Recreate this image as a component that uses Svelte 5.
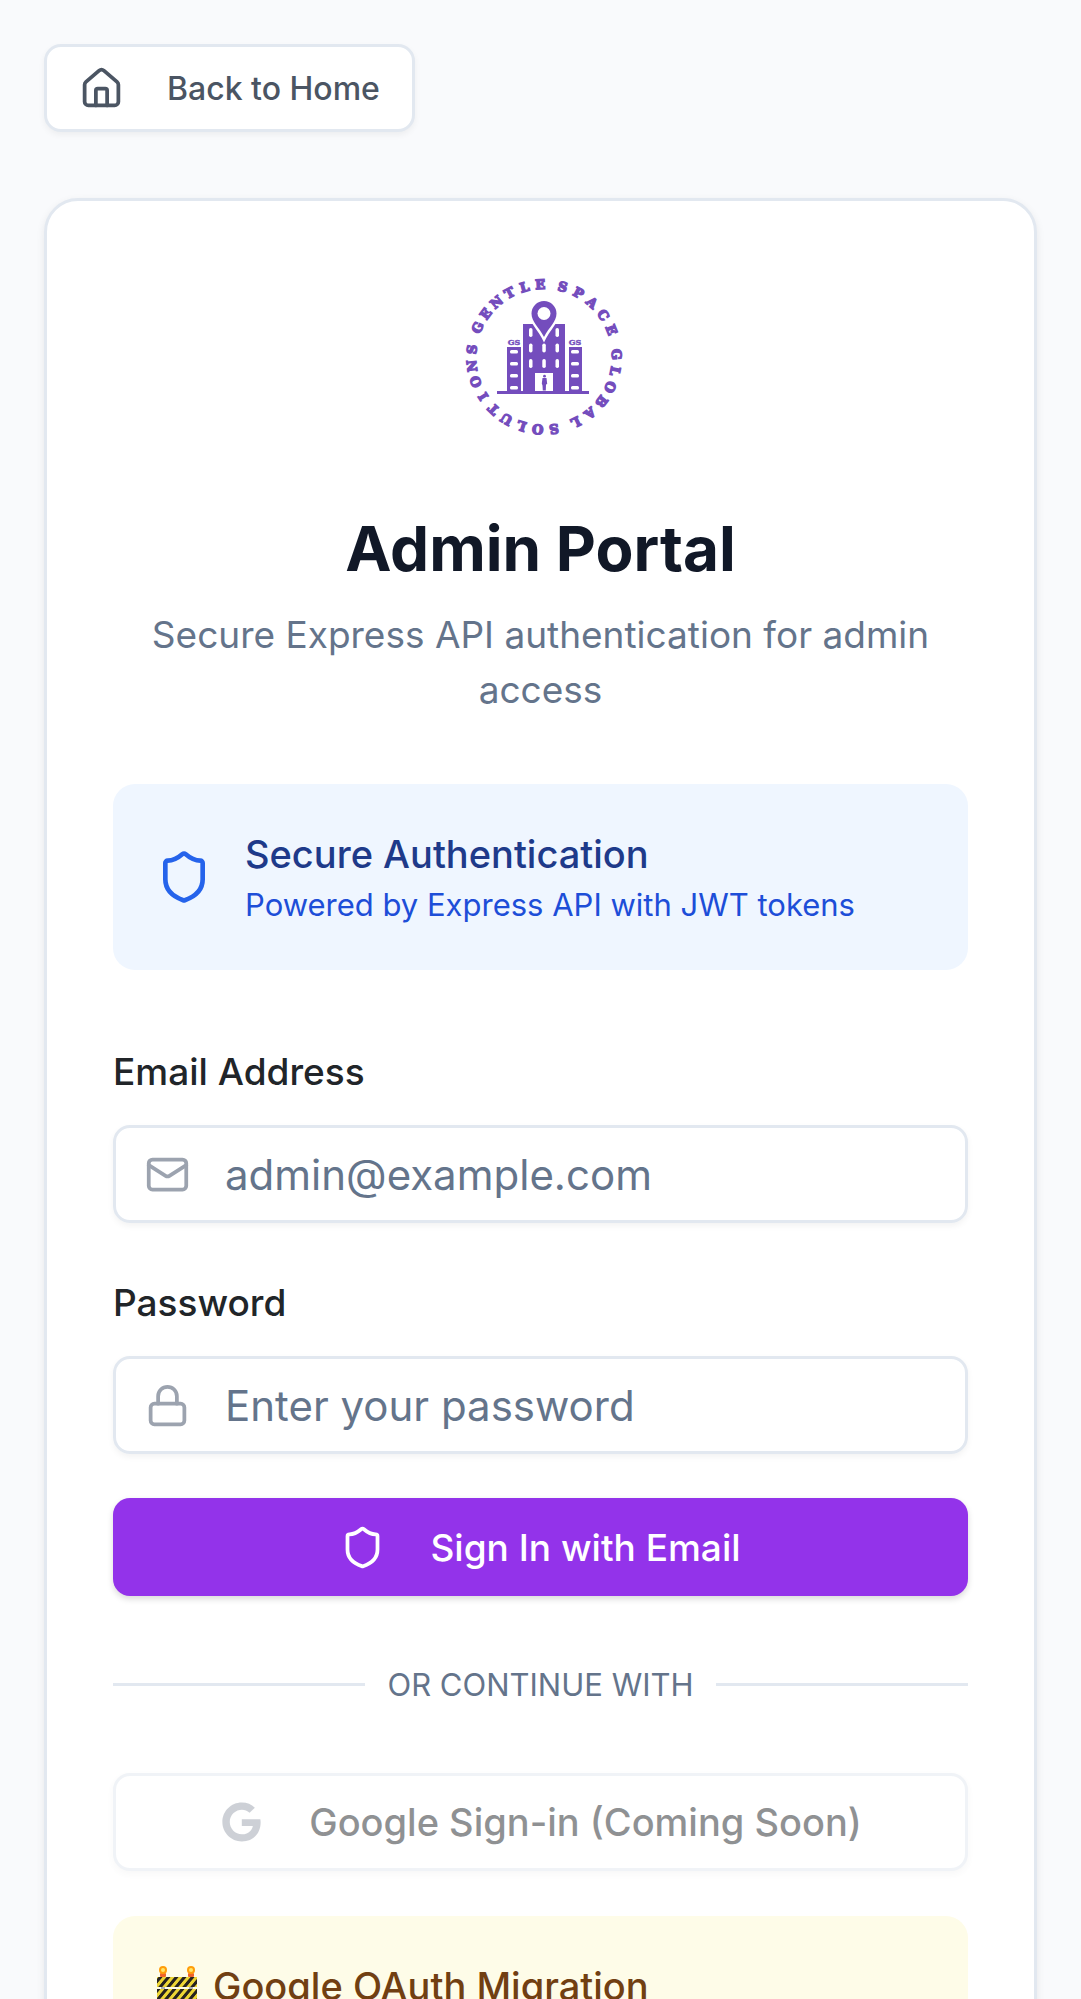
<script>
  const shield =
    'M20 13c0 5-3.5 7.5-7.66 8.95a1 1 0 0 1-.67-.01C7.5 20.5 4 18 4 13V6a1 1 0 0 1 1-1c2 0 4.5-1.2 6.24-2.72a1.17 1.17 0 0 1 1.52 0C14.51 3.81 17 5 19 5a1 1 0 0 1 1 1z';

  // Words of the round emblem, each with the angles of its first and last letter.
  const words = [
    { text: 'GENTLE', from: -66, to: -3 },
    { text: 'SPACE', from: 15, to: 68 },
    { text: 'GLOBAL', from: 88, to: 154 },
    { text: 'SOLUTIONS', from: 172, to: 276 },
  ];
  const letters = words.flatMap(({ text, from, to }) =>
    [...text].map((char, i) => ({
      char,
      angle: from + ((to - from) * i) / (text.length - 1),
    }))
  );

  let email = $state('');
  let password = $state('');
</script>

<main>
  <a class="back" href="/">
    <svg class="icon" viewBox="0 0 24 24" aria-hidden="true">
      <path d="M15 21v-8a1 1 0 0 0-1-1h-4a1 1 0 0 0-1 1v8" />
      <path d="M3 10a2 2 0 0 1 .709-1.528l7-5.999a2 2 0 0 1 2.582 0l7 5.999A2 2 0 0 1 21 10v9a2 2 0 0 1-2 2H5a2 2 0 0 1-2-2z" />
    </svg>
    Back to Home
  </a>

  <section class="card">
    <header>
      <svg class="logo" viewBox="0 0 160 160" role="img" aria-label="Gentle Space Global Solutions">
        {#each letters as { char, angle }}
          <text class="ring" x="80" y="12" transform="rotate({angle} 80 80)">{char}</text>
        {/each}
        <path d="M33 114h92v3H33z" />
        <path d="M43 70h14v45H43zM105 70h13v45h-13z" />
        <path d="M59 47h42v68H59z" />
        <text class="tag" x="50" y="68">GS</text>
        <text class="tag" x="111" y="68">GS</text>
        <g class="gap">
          <rect x="46" y="73" width="8" height="3.5" rx="1.5" />
          <rect x="46" y="85" width="8" height="3.5" rx="1.5" />
          <rect x="46" y="97" width="8" height="3.5" rx="1.5" />
          <rect x="46" y="109" width="8" height="3.5" rx="1.5" />
          <rect x="107" y="73" width="8" height="3.5" rx="1.5" />
          <rect x="107" y="85" width="8" height="3.5" rx="1.5" />
          <rect x="107" y="97" width="8" height="3.5" rx="1.5" />
          <rect x="107" y="109" width="8" height="3.5" rx="1.5" />
          <rect x="65" y="51" width="3.5" height="9" rx="1.7" />
          <rect x="91.5" y="51" width="3.5" height="9" rx="1.7" />
          <rect x="65" y="66.5" width="3.5" height="9" rx="1.7" />
          <rect x="78.3" y="66.5" width="3.5" height="9" rx="1.7" />
          <rect x="91.5" y="66.5" width="3.5" height="9" rx="1.7" />
          <rect x="65" y="82" width="3.5" height="9" rx="1.7" />
          <rect x="78.3" y="82" width="3.5" height="9" rx="1.7" />
          <rect x="91.5" y="82" width="3.5" height="9" rx="1.7" />
          <rect x="71" y="96" width="18" height="18" />
        </g>
        <path class="pin" d="M80 24a12.5 12.5 0 0 0-12.5 12.5C67.5 45 75 50 80 60c5-10 12.5-15 12.5-23.5A12.5 12.5 0 0 0 80 24z" />
        <circle class="gap" cx="80" cy="36.5" r="6.5" />
        <circle cx="80.5" cy="99.2" r="1.4" />
        <path d="M78.5 101h4l.7 6-1.2.5-.2 6h-3l-.3-5-.7-2z" />
      </svg>
      <h1>Admin Portal</h1>
      <p>Secure Express API authentication for admin access</p>
    </header>

    <div class="info">
      <svg class="icon large" viewBox="0 0 24 24" aria-hidden="true"><path d={shield} /></svg>
      <div>
        <strong>Secure Authentication</strong>
        <span>Powered by Express API with JWT tokens</span>
      </div>
    </div>

    <form onsubmit={(event) => event.preventDefault()}>
      <div class="field">
        <label for="email">Email Address</label>
        <div class="box">
          <svg class="icon" viewBox="0 0 24 24" aria-hidden="true">
            <rect width="20" height="16" x="2" y="4" rx="2" />
            <path d="m22 7-8.97 5.7a1.94 1.94 0 0 1-2.06 0L2 7" />
          </svg>
          <input id="email" type="email" placeholder="admin@example.com" bind:value={email} />
        </div>
      </div>
      <div class="field">
        <label for="password">Password</label>
        <div class="box">
          <svg class="icon" viewBox="0 0 24 24" aria-hidden="true">
            <rect width="18" height="11" x="3" y="11" rx="2" />
            <path d="M7 11V7a5 5 0 0 1 10 0v4" />
          </svg>
          <input id="password" type="password" placeholder="Enter your password" bind:value={password} />
        </div>
      </div>
      <button class="primary" type="submit">
        <svg class="icon" viewBox="0 0 24 24" aria-hidden="true"><path d={shield} /></svg>
        Sign In with Email
      </button>
    </form>

    <div class="divider"><span>OR CONTINUE WITH</span></div>

    <button class="google" type="button" disabled>
      <svg viewBox="-12 -12 512 536" aria-hidden="true">
        <path d="M488 261.8C488 403.3 391.1 504 248 504 110.8 504 0 393.2 0 256S110.8 8 248 8c66.8 0 123 24.5 166.3 64.9l-67.5 64.9C258.5 52.6 94.3 116.6 94.3 256c0 86.5 69.1 156.6 153.7 156.6 98.2 0 135-70.4 140.8-106.9H248v-85.3h236.1c2.3 12.7 3.9 24.9 3.9 41.4z" />
      </svg>
      Google Sign-in (Coming Soon)
    </button>

    <aside>
      <svg viewBox="0 0 42 52" aria-hidden="true">
        <defs>
          <pattern id="stripes" width="8" height="60" patternUnits="userSpaceOnUse" patternTransform="skewX(-40)">
            <rect width="8" height="60" fill="#ecd534" />
            <rect width="4" height="60" fill="#27231f" />
          </pattern>
        </defs>
        <path d="M5 16h4v36H5zM33 16h4v36h-4z" fill="#a9adb0" />
        <rect x="4" y="12" width="6" height="4" rx="1" fill="#f0642a" />
        <rect x="32" y="12" width="6" height="4" rx="1" fill="#f0642a" />
        <circle cx="7" cy="9" r="4" fill="#ff9d0a" />
        <circle cx="35" cy="9" r="4" fill="#ff9d0a" />
        <circle cx="7" cy="9" r="2" fill="#ffe66b" />
        <circle cx="35" cy="9" r="2" fill="#ffe66b" />
        <rect x="1" y="16" width="40" height="10" fill="url(#stripes)" />
        <rect x="1" y="28" width="40" height="10" fill="url(#stripes)" />
      </svg>
      <strong>Google OAuth Migration</strong>
    </aside>
  </section>
</main>

<style>
  :global(body) {
    margin: 0;
    background: #f9fafc;
  }
  main {
    box-sizing: border-box;
    min-height: 100vh;
    padding: 44px;
    font-family: Inter, 'Liberation Sans', sans-serif;
    font-size: 37px;
    font-weight: 500;
    color: #212529;
  }
  .icon {
    width: 45px;
    height: 45px;
    flex: none;
    fill: none;
    stroke: currentColor;
    stroke-width: 2;
    stroke-linecap: round;
    stroke-linejoin: round;
  }
  .icon.large {
    width: 56px;
    height: 56px;
    color: #2563eb;
  }
  .back {
    display: inline-flex;
    align-items: center;
    gap: 43px;
    box-sizing: border-box;
    height: 88px;
    padding: 0 32px;
    border: 3px solid #e2e8f0;
    border-radius: 17px;
    background: #fff;
    box-shadow: 0 3px 6px rgb(0 0 0 / 5%);
    color: #4b5563;
    font-size: 32px;
    text-decoration: none;
    vertical-align: top;
  }
  .card {
    margin-top: 66px;
    padding: 66px;
    border: 3px solid #e2e8f0;
    border-radius: 34px;
    background: #fff;
    box-shadow: 0 3px 8px rgb(0 0 0 / 8%);
  }
  header {
    display: flex;
    flex-direction: column;
    align-items: center;
    text-align: center;
  }
  .logo {
    width: 160px;
    height: 160px;
    margin: 10px 0 78px 6px;
    fill: #744dbd;
  }
  .ring {
    font: bold 13px 'DejaVu Serif', serif;
    text-anchor: middle;
    stroke: #744dbd;
    stroke-width: 1.4;
  }
  .tag {
    font: bold 8px 'DejaVu Serif', serif;
    text-anchor: middle;
    stroke: #744dbd;
    stroke-width: 0.4;
  }
  .gap {
    fill: #fff;
  }
  .pin {
    stroke: #fff;
    stroke-width: 5;
    paint-order: stroke;
  }
  h1 {
    margin: 0;
    font-size: 62px;
    line-height: 67px;
    font-weight: 700;
    color: #111827;
  }
  p {
    margin: 25px 0 0;
    line-height: 55px;
    font-weight: 400;
    color: #64748b;
  }
  strong {
    display: block;
    font-size: 38px;
    line-height: 55px;
    font-weight: 500;
  }
  .info {
    display: flex;
    align-items: center;
    gap: 33px;
    margin: 67px 0 82px;
    padding: 43px;
    border-radius: 22px;
    background: #eff6ff;
    color: #1e3a8a;
  }
  .info span {
    display: block;
    font-size: 31px;
    line-height: 45px;
    font-weight: 400;
    color: #1d4ed8;
  }
  .field {
    margin-bottom: 60px;
  }
  .field:nth-child(2) {
    margin-bottom: 44px;
  }
  label {
    display: block;
    margin-bottom: 33px;
    line-height: 40px;
  }
  .box {
    display: flex;
    align-items: center;
    gap: 35px;
    box-sizing: border-box;
    height: 98px;
    padding: 0 29px;
    border: 3px solid #e2e8f0;
    border-radius: 17px;
    box-shadow: 0 3px 6px rgb(0 0 0 / 5%);
    color: #9ca3af;
  }
  input {
    flex: 1;
    min-width: 0;
    padding: 0;
    border: 0;
    outline: 0;
    background: none;
    font: 400 42px Inter, 'Liberation Sans', sans-serif;
    color: #212529;
  }
  input::placeholder {
    color: #64748b;
    opacity: 1;
  }
  button {
    display: flex;
    align-items: center;
    justify-content: center;
    gap: 45px;
    box-sizing: border-box;
    width: 100%;
    height: 98px;
    border: 0;
    border-radius: 17px;
    font: inherit;
  }
  .primary {
    background: #9333ea;
    box-shadow: 0 3px 6px rgb(0 0 0 / 15%);
    color: #fff;
  }
  .divider {
    display: flex;
    align-items: center;
    gap: 22px;
    margin: 66px 0;
    font-size: 31px;
    line-height: 45px;
    font-weight: 400;
    color: #64748b;
  }
  .divider::before,
  .divider::after {
    content: '';
    flex: 1;
    height: 3px;
    background: #e2e8f0;
  }
  .google {
    border: 3px solid #e2e8f0;
    background: #fff;
    box-shadow: 0 3px 6px rgb(0 0 0 / 5%);
    color: #212529;
    font-size: 38px;
    opacity: 0.5;
  }
  .google svg {
    width: 45px;
    height: 42px;
    fill: #9ca3af;
  }
  aside {
    display: flex;
    align-items: center;
    gap: 15px;
    margin-top: 45px;
    padding: 43px;
    border-radius: 22px;
    background: #fefce8;
    color: #713f12;
  }
  aside svg {
    width: 42px;
    height: 52px;
  }
</style>
